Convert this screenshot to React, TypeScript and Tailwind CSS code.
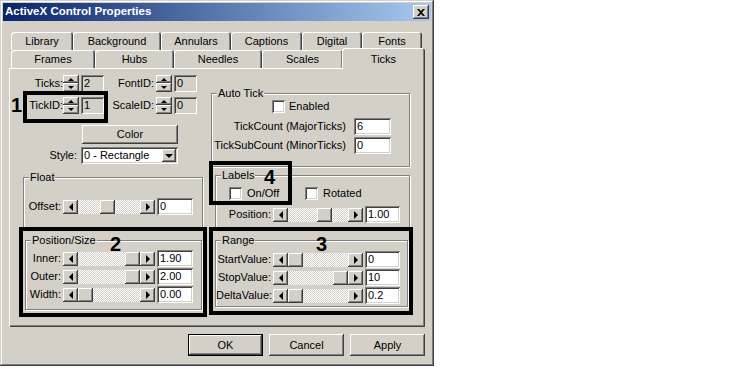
import React from 'react'

const raised =
  'shadow-[inset_-1px_-1px_0_#404040,inset_1px_1px_0_#ffffff,inset_-2px_-2px_0_#808080,inset_2px_2px_0_#d4d0c8]'
const sunken =
  'shadow-[inset_1px_1px_0_#808080,inset_-1px_-1px_0_#ffffff,inset_2px_2px_0_#404040,inset_-2px_-2px_0_#d4d0c8]'

const Spinner = () => (
  <div className="flex flex-col w-[16px] h-[17px]">
    <div className={`h-[8px] bg-[#d4d0c8] flex items-center justify-center ${raised}`}>
      <div className="w-0 h-0 border-x-[3px] border-x-transparent border-b-[3px] border-b-black" />
    </div>
    <div className={`h-[9px] bg-[#d4d0c8] flex items-center justify-center ${raised}`}>
      <div className="w-0 h-0 border-x-[3px] border-x-transparent border-t-[3px] border-t-black" />
    </div>
  </div>
)

const Edit = ({ value, w, gray }: { value: string; w: string; gray?: boolean }) => (
  <div
    className={`h-[17px] ${w} ${gray ? 'bg-[#d4d0c8]' : 'bg-white'} ${sunken} pl-[3px] leading-[17px] shrink-0`}
  >
    {value}
  </div>
)

const ArrowBtn = ({ dir }: { dir: 'left' | 'right' }) => (
  <div className={`w-[15px] h-full bg-[#d4d0c8] flex items-center justify-center shrink-0 ${raised}`}>
    {dir === 'left' ? (
      <div className="w-0 h-0 border-y-[4px] border-y-transparent border-r-[4px] border-r-black" />
    ) : (
      <div className="w-0 h-0 border-y-[4px] border-y-transparent border-l-[4px] border-l-black" />
    )}
  </div>
)

const Slider = ({ w, thumb }: { w: string; thumb: string }) => (
  <div className={`flex h-[14px] shrink-0 ${w}`}>
    <ArrowBtn dir="left" />
    <div className="flex-1 flex bg-[repeating-conic-gradient(#d4d0c8_0%_25%,#ffffff_0%_50%)] bg-[length:2px_2px]">
      <div className={`w-[15px] h-full bg-[#d4d0c8] ${raised} ${thumb}`} />
    </div>
    <ArrowBtn dir="right" />
  </div>
)

const Check = () => <div className={`w-[13px] h-[13px] bg-white shrink-0 ${sunken}`} />

const Group = ({
  title,
  className,
  children,
}: {
  title: string
  className: string
  children?: React.ReactNode
}) => (
  <div
    className={`relative border border-[#808080] shadow-[inset_1px_1px_0_#ffffff,1px_1px_0_#ffffff] ${className}`}
  >
    <span className="absolute -top-[7px] left-[5px] px-[1px] bg-[#d4d0c8] leading-[13px]">{title}</span>
    {children}
  </div>
)

const SliderRow = ({
  label,
  labelW,
  sliderW,
  thumb,
  value,
  editW,
  className = '',
}: {
  label: string
  labelW: string
  sliderW: string
  thumb: string
  value: string
  editW: string
  className?: string
}) => (
  <div className={`flex items-center ${className}`}>
    <div className={`${labelW} text-right whitespace-nowrap shrink-0`}>{label}</div>
    <div className="ml-[2px]">
      <Slider w={sliderW} thumb={thumb} />
    </div>
    <div className="ml-[2px]">
      <Edit value={value} w={editW} />
    </div>
  </div>
)

const Tab = ({ label, w }: { label: string; w: string }) => (
  <div
    className={`${w} h-[18px] shrink-0 rounded-t-[3px] flex items-center justify-center bg-[#d4d0c8] shadow-[inset_1px_1px_0_#ffffff,inset_-1px_0_0_#404040,inset_-2px_0_0_#808080]`}
  >
    {label}
  </div>
)

const BigNum = ({ n, className }: { n: string; className: string }) => (
  <span className={`absolute text-[20px] leading-none font-bold text-black ${className}`}>{n}</span>
)

export default function App() {
  return (
    <div className="w-[750px] h-[369px] bg-white font-['Liberation_Sans',Arial,sans-serif] text-[11px] text-black">
      <div className="w-[434px] h-[366px] bg-[#d4d0c8] p-[3px] shadow-[inset_-1px_-1px_0_#404040,inset_1px_1px_0_#d4d0c8,inset_-2px_-2px_0_#808080,inset_2px_2px_0_#ffffff]">
        {/* title bar */}
        <div className="h-[18px] flex items-center justify-between bg-[linear-gradient(to_right,#0a246a,#a6caf0)] pl-[2px] pr-[2px]">
          <span className="text-white font-bold text-[11.5px] leading-none">ActiveX Control Properties</span>
          <div className={`w-[16px] h-[14px] bg-[#d4d0c8] flex items-center justify-center ${raised}`}>
            <svg width="8" height="7" viewBox="0 0 8 7">
              <path d="M0 0h2l2 2 2-2h2L5 3.5 8 7H6L4 5 2 7H0l3-3.5z" fill="#000" />
            </svg>
          </div>
        </div>

        {/* tabs */}
        <div className="mt-[11px] ml-[8px] flex">
          <Tab label="Library" w="w-[62px]" />
          <Tab label="Background" w="w-[88px]" />
          <Tab label="Annulars" w="w-[70px]" />
          <Tab label="Captions" w="w-[71px]" />
          <Tab label="Digital" w="w-[60px]" />
          <Tab label="Fonts" w="w-[60px]" />
        </div>
        <div className="ml-[8px] flex h-[18px] items-start">
          <Tab label="Frames" w="w-[84px]" />
          <Tab label="Hubs" w="w-[79px]" />
          <Tab label="Needles" w="w-[88px]" />
          <Tab label="Scales" w="w-[81px]" />
          <div className="relative z-10 -ml-[1px] -mt-[2px] w-[83px] h-[22px] rounded-t-[3px] bg-[#d4d0c8] flex justify-center pt-[3px] shadow-[inset_1px_1px_0_#ffffff,inset_-1px_0_0_#404040,inset_-2px_0_0_#808080]">
            Ticks
          </div>
        </div>

        {/* panel */}
        <div className="relative ml-[6px] w-[416px] h-[259px] flex shadow-[inset_1px_1px_0_#ffffff,inset_-1px_-1px_0_#404040,inset_-2px_-2px_0_#808080]">
          {/* left column */}
          <div className="w-[200px] shrink-0">
            <div className="mt-[7px] flex items-center h-[17px]">
              <div className="w-[54px] text-right">Ticks:</div>
              <Spinner />
              <div className="ml-[2px]">
                <Edit value="2" w="w-[23px]" gray />
              </div>
              <div className="w-[52px] pr-[2px] text-right">FontID:</div>
              <Spinner />
              <div className="ml-[2px]">
                <Edit value="0" w="w-[23px]" gray />
              </div>
            </div>
            <div className="mt-[5px] flex items-center h-[17px]">
              <div className="w-[54px] text-right">TickID:</div>
              <Spinner />
              <div className="ml-[2px]">
                <Edit value="1" w="w-[23px]" gray />
              </div>
              <div className="w-[52px] pr-[2px] text-right">ScaleID:</div>
              <Spinner />
              <div className="ml-[2px]">
                <Edit value="0" w="w-[23px]" gray />
              </div>
            </div>
            <div
              className={`mt-[11px] ml-[73px] w-[96px] h-[19px] flex items-center justify-center bg-[#d4d0c8] ${raised}`}
            >
              Color
            </div>
            <div className="mt-[3px] flex items-center">
              <div className="w-[72px] pr-[4px] text-right">Style:</div>
              <div className={`w-[97px] h-[17px] bg-white flex items-center justify-between pl-[3px] pr-[2px] ${sunken}`}>
                <span>0 - Rectangle</span>
                <div className={`w-[14px] h-[13px] bg-[#d4d0c8] flex items-center justify-center ${raised}`}>
                  <div className="w-0 h-0 border-x-[4px] border-x-transparent border-t-[4px] border-t-black" />
                </div>
              </div>
            </div>

            <Group title="Float" className="mt-[13px] ml-[14px] w-[180px] h-[51px]">
              <SliderRow
                className="mt-[20px]"
                label="Offset:"
                labelW="w-[37px]"
                sliderW="w-[92px]"
                thumb="ml-[22px]"
                value="0"
                editW="w-[36px]"
              />
            </Group>

            <Group title="Position/Size" className="mt-[12px] ml-[16px] w-[177px] h-[70px]">
              <SliderRow
                className="mt-[9px]"
                label="Inner:"
                labelW="w-[35px]"
                sliderW="w-[92px]"
                thumb="ml-auto"
                value="1.90"
                editW="w-[36px]"
              />
              <SliderRow
                className="mt-[1px]"
                label="Outer:"
                labelW="w-[35px]"
                sliderW="w-[92px]"
                thumb="ml-auto"
                value="2.00"
                editW="w-[36px]"
              />
              <SliderRow
                className="mt-[1px]"
                label="Width:"
                labelW="w-[35px]"
                sliderW="w-[92px]"
                thumb="ml-0"
                value="0.00"
                editW="w-[36px]"
              />
            </Group>
          </div>

          {/* right column */}
          <div className="flex-1">
            <Group title="Auto Tick" className="mt-[25px] ml-[2px] w-[199px] h-[74px]">
              <div className="mt-[6px] ml-[60px] flex items-center h-[13px]">
                <Check />
                <span className="ml-[4px]">Enabled</span>
              </div>
              <div className="mt-[5px] flex items-center">
                <div className="w-[134px] text-right whitespace-nowrap flex justify-end">TickCount (MajorTicks)</div>
                <div className="ml-[8px]">
                  <Edit value="6" w="w-[37px]" />
                </div>
              </div>
              <div className="mt-[2px] flex items-center">
                <div className="w-[134px] text-right whitespace-nowrap flex justify-end">TickSubCount (MinorTicks)</div>
                <div className="ml-[8px]">
                  <Edit value="0" w="w-[37px]" />
                </div>
              </div>
            </Group>

            <Group title="Labels" className="mt-[8px] ml-[6px] w-[195px] h-[53px]">
              <div className="mt-[11px] ml-[13px] flex items-center h-[13px]">
                <div className="w-[76px] flex items-center">
                  <Check />
                  <span className="ml-[5px]">On/Off</span>
                </div>
                <Check />
                <span className="ml-[5px]">Rotated</span>
              </div>
              <SliderRow
                className="mt-[6px]"
                label="Position:"
                labelW="w-[55px]"
                sliderW="w-[90px]"
                thumb="ml-[29px]"
                value="1.00"
                editW="w-[35px]"
              />
            </Group>

            <Group title="Range" className="mt-[12px] ml-[6px] w-[193px] h-[67px]">
              <SliderRow
                className="mt-[10px]"
                label="StartValue:"
                labelW="w-[55px]"
                sliderW="w-[90px]"
                thumb="ml-0"
                value="0"
                editW="w-[35px]"
              />
              <SliderRow
                className="mt-[1px]"
                label="StopValue:"
                labelW="w-[55px]"
                sliderW="w-[90px]"
                thumb="ml-auto"
                value="10"
                editW="w-[35px]"
              />
              <SliderRow
                className="mt-[1px]"
                label="DeltaValue:"
                labelW="w-[55px]"
                sliderW="w-[90px]"
                thumb="ml-0"
                value="0.2"
                editW="w-[35px]"
              />
            </Group>
          </div>

          {/* annotation boxes */}
          <div className="absolute left-[14px] top-[23px] w-[85px] h-[32px] border-[4px] border-black" />
          <BigNum n="1" className="left-[2px] top-[27px]" />
          <div className="absolute left-[10px] top-[159px] w-[188px] h-[90px] border-[4px] border-black" />
          <BigNum n="2" className="left-[101px] top-[166px]" />
          <div className="absolute left-[200px] top-[159px] w-[204px] h-[88px] border-[4px] border-black" />
          <BigNum n="3" className="left-[307px] top-[166px]" />
          <div className="absolute left-[200px] top-[93px] w-[83px] h-[44px] border-[4px] border-black" />
          <BigNum n="4" className="left-[255px] top-[99px]" />
        </div>

        {/* buttons */}
        <div className="ml-[6px] w-[416px] mt-[7px] flex justify-end gap-[6px]">
          <div
            className={`w-[75px] h-[22px] border border-black flex items-center justify-center bg-[#d4d0c8] ${raised}`}
          >
            OK
          </div>
          <div className={`w-[75px] h-[22px] flex items-center justify-center bg-[#d4d0c8] ${raised}`}>Cancel</div>
          <div className={`w-[75px] h-[22px] flex items-center justify-center bg-[#d4d0c8] ${raised}`}>Apply</div>
        </div>
      </div>
    </div>
  )
}
